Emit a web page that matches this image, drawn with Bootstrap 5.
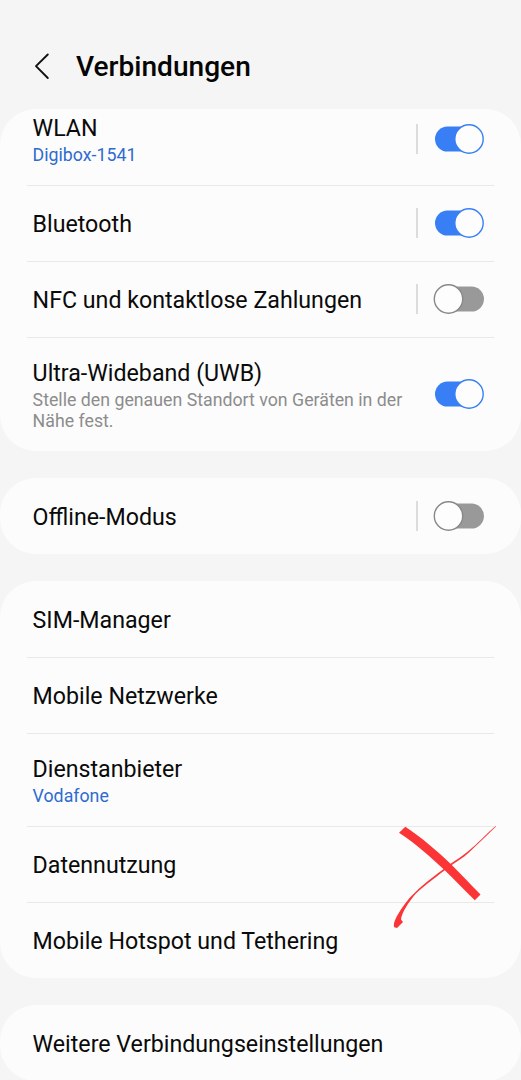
<!DOCTYPE html>
<html lang="de">
<head>
<meta charset="utf-8">
<meta name="viewport" content="width=device-width, initial-scale=1">
<title>Verbindungen</title>
<link href="https://cdn.jsdelivr.net/npm/bootstrap@5.3.0/dist/css/bootstrap.min.css" rel="stylesheet">
<style>
body{background:#f5f5f5;color:#0a0a0a;font-family:Roboto,"Liberation Sans",sans-serif;height:1080px;overflow:hidden}
.topbar{height:109px;padding:25px 0 0 33px}
.topbar h1{font-size:28.1px;font-weight:500;line-height:32px;margin-left:25px!important;color:#050505}
.panel{background:#fcfcfc;border-radius:36px;margin-bottom:27.5px;padding:0 27px;overflow:hidden}
.entry{height:75.8px;padding:0 10px 0 5.6px;color:inherit;background:none;border-color:#e9e9e9;border-width:0 0 1.4px}
.entry:last-child{border-bottom:0}
.entry:first-child{height:76.6px}
.entry.two,.entry.two:first-child{height:93px}
.entry.three{height:113px}
.entry:last-child:not(:first-child):not(.three){height:75px}
.entry:only-child{height:75.8px}
.first{margin-top:-16px}
.ttl{font-size:23.2px;line-height:27px}
.entry>.ttl{padding-top:3px}
.sub{font-size:17.75px;line-height:20.6px;margin-top:3px;color:#8c8c8c}
.two>div{padding-top:3px}
.three .sub{margin-top:3.4px;line-height:21px}
.three>div{padding-top:4px}
.sub.val{color:#2e6bd0}
.vline{width:1.4px;height:30px;background:#dcdcdc;margin-right:15.2px}
.sw{width:51px;height:30px;display:block}
.first .entry:not(.three)>.vline,.first .entry:not(.three)>.sw{margin-bottom:.4px}
.scrawl{left:390px;top:820px;pointer-events:none}
</style>
</head>
<body>
<header class="topbar d-flex align-items-center">
  <svg width="18" height="28" viewBox="0 0 18 28" fill="none" stroke="#111" stroke-width="1.9" stroke-linecap="round" stroke-linejoin="round"><path d="M14.8 1.5 3 13.2 14.8 25"/></svg>
  <h1 class="m-0">Verbindungen</h1>
</header>
<svg class="d-none">
  <symbol id="on" viewBox="0 0 51 30"><rect x="2" y="2.6" width="48" height="25" rx="12.5" fill="#387ff5"/><circle cx="36" cy="15" r="14.2" fill="#fdfdfd" stroke="#387ff5" stroke-width="1.4"/></symbol>
  <symbol id="off" viewBox="0 0 51 30"><rect x="3" y="2.6" width="48" height="25" rx="12.5" fill="#999"/><circle cx="15.5" cy="15" r="14.2" fill="#fdfdfd" stroke="#888" stroke-width="1.4"/></symbol>
</svg>
<main>
  <section class="panel"><div class="list-group list-group-flush first rounded-0">
    <div class="list-group-item entry two d-flex align-items-center"><div class="flex-grow-1"><div class="ttl">WLAN</div><div class="sub val">Digibox-1541</div></div><span class="vline"></span><svg class="sw"><use href="#on"/></svg></div>
    <div class="list-group-item entry d-flex align-items-center"><div class="ttl flex-grow-1">Bluetooth</div><span class="vline"></span><svg class="sw"><use href="#on"/></svg></div>
    <div class="list-group-item entry d-flex align-items-center"><div class="ttl flex-grow-1">NFC und kontaktlose Zahlungen</div><span class="vline"></span><svg class="sw"><use href="#off"/></svg></div>
    <div class="list-group-item entry three d-flex align-items-center"><div class="flex-grow-1"><div class="ttl">Ultra-Wideband (UWB)</div><div class="sub">Stelle den genauen Standort von Geräten in der<br>Nähe fest.</div></div><svg class="sw"><use href="#on"/></svg></div>
  </div></section>
  <section class="panel"><div class="list-group list-group-flush">
    <div class="list-group-item entry d-flex align-items-center"><div class="ttl flex-grow-1">Offline-Modus</div><span class="vline"></span><svg class="sw"><use href="#off"/></svg></div>
  </div></section>
  <section class="panel"><div class="list-group list-group-flush">
    <div class="list-group-item entry d-flex align-items-center"><div class="ttl">SIM-Manager</div></div>
    <div class="list-group-item entry d-flex align-items-center"><div class="ttl">Mobile Netzwerke</div></div>
    <div class="list-group-item entry two d-flex align-items-center"><div><div class="ttl">Dienstanbieter</div><div class="sub val">Vodafone</div></div></div>
    <div class="list-group-item entry d-flex align-items-center"><div class="ttl">Datennutzung</div></div>
    <div class="list-group-item entry d-flex align-items-center"><div class="ttl">Mobile Hotspot und Tethering</div></div>
  </div></section>
  <section class="panel mb-0"><div class="list-group list-group-flush">
    <div class="list-group-item entry d-flex align-items-center"><div class="ttl">Weitere Verbindungseinstellungen</div></div>
  </div></section>
</main>
<!-- hand-drawn cross over "Datennutzung" -->
<svg class="scrawl position-absolute" width="110" height="112" viewBox="0 0 110 112" fill="#fb3535">
  <path d="M9 12.7 15.3 6.8C31 17 46 30 60.500 43.800C71 54 80 64 90.500 74.500L84.800 80.200C74 70 65 60 54.500 50C40 36.500 25 23 9 12.700Z"/>
  <path d="M105.600 6 106 6.500C97 15 88 24 79.500 32C73 38 66 42 60 46.200C48 55.500 34 65.500 25.500 74C19 82 11.800 92 11 99.500L13 102 7 108 4.300 107.300C3 104 5 100 7 96C12 87 18 79 24.500 73C35 62 49 53 58.500 45.200C66 40 72 36.500 78.500 31C88 23 96 14.500 105.600 6Z"/>
</svg>
<script src="https://cdn.jsdelivr.net/npm/bootstrap@5.3.0/dist/js/bootstrap.bundle.min.js"></script>
</body>
</html>
